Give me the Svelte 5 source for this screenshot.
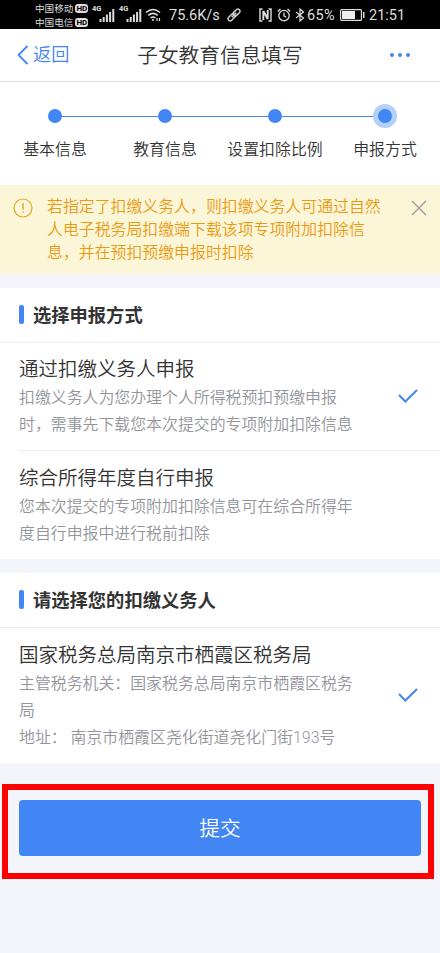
<script>
  let steps = ['基本信息', '教育信息', '设置扣除比例', '申报方式'];
  let current = 3;
  let showNotice = true;
  let selected = 0;

  let notice = '若指定了扣缴义务人，则扣缴义务人可通过自然\n人电子税务局扣缴端下载该项专项附加扣除信\n息，并在预扣预缴申报时扣除';

  let methods = [
    {
      title: '通过扣缴义务人申报',
      desc: '扣缴义务人为您办理个人所得税预扣预缴申报\n时，需事先下载您本次提交的专项附加扣除信息'
    },
    {
      title: '综合所得年度自行申报',
      desc: '您本次提交的专项附加扣除信息可在综合所得年\n度自行申报中进行税前扣除'
    }
  ];

  let agent = {
    title: '国家税务总局南京市栖霞区税务局',
    desc: '主管税务机关：国家税务总局南京市栖霞区税务\n局\n地址： 南京市栖霞区尧化街道尧化门街193号'
  };
</script>

<div class="page">
  <div class="status">
    <div class="carriers">
      <div>中国移动<b>HD</b></div>
      <div>中国电信<b>HD</b></div>
    </div>
    {#each [0, 1] as sim}
      <div class="signal">
        <span>4G</span>
        <svg width="16" height="14" viewBox="0 0 16 14">
          <path d="M1.5 14v-3M4.7 14v-5M7.9 14V6.500M11.100 14V4M14.300 14V1" stroke="#ddd" stroke-width="2" />
        </svg>
      </div>
    {/each}
    <svg class="wifi" width="17" height="14" viewBox="0 0 17 14" fill="none" stroke="#ddd" stroke-width="1.6">
      <path d="M1 4.500Q8 -1.500 15 4.500M3.300 7.300Q8 3.300 12.700 7.300M5.600 10Q8 8 10.400 10" />
      <circle cx="8" cy="12" r="1" fill="#ddd" stroke="none" />
      <path d="M12 10v3M14.500 10v3" stroke-width="1.200" />
    </svg>
    <span class="speed">75.6K/s</span>
    <svg class="link" width="14" height="14" viewBox="0 0 14 14" fill="none" stroke="#ccc" stroke-width="1.5">
      <rect x="-0.500" y="4.900" width="8" height="4.200" rx="2.100" transform="rotate(-45 7 7)" />
      <rect x="6.500" y="4.900" width="8" height="4.200" rx="2.100" transform="rotate(-45 7 7)" />
      <path d="M4.800 9.200l4.400-4.400" />
    </svg>
    <svg class="nfc" width="13" height="14" viewBox="0 0 13 14" fill="none" stroke="#ddd">
      <path d="M3.500 1H1v12h2.500M9.500 1H12v12H9.500" stroke-width="1.400" />
      <path d="M4.300 12V3l4.400 8V2" stroke-width="1.900" />
    </svg>
    <svg class="alarm" width="14" height="14" viewBox="0 0 14 14" fill="none" stroke="#ddd" stroke-width="1.300">
      <circle cx="7" cy="7.600" r="5.200" />
      <path d="M7 4.500v3.300l2.200 1.500M.8 3.500L3.500 1M13.200 3.500L10.500 1" />
    </svg>
    <svg class="bt" width="10" height="14" viewBox="0 0 10 14" fill="none" stroke="#ddd" stroke-width="1.200">
      <path d="M1 4l7.500 6L5 13V1l3.500 3L1 10" />
    </svg>
    <span class="percent">65%</span>
    <svg class="battery" width="25" height="12" viewBox="0 0 25 12">
      <rect x=".6" y=".6" width="20.800" height="10.800" rx="1" fill="none" stroke="#ddd" stroke-width="1.200" />
      <rect x="2" y="2" width="13" height="8" fill="#eee" />
      <rect x="23" y="3" width="1.500" height="6" fill="#ddd" />
    </svg>
    <span class="time">21:51</span>
  </div>

  <div class="nav">
    <div class="back">
      <svg width="12" height="20" viewBox="0 0 12 20" fill="none" stroke="#4285f4" stroke-width="1.800">
        <path d="M10.500 1L1.500 10l9 9" />
      </svg>
      <span>返回</span>
    </div>
    <div class="title">子女教育信息填写</div>
    <div class="more"><i></i><i></i><i></i></div>
  </div>

  <div class="steps">
    {#each steps as step, i}
      <div class="step" class:current={i === current}>
        <div class="track"><i></i></div>
        <span>{step}</span>
      </div>
    {/each}
  </div>

  {#if showNotice}
    <div class="notice">
      <svg class="warn" width="20" height="20" viewBox="0 0 20 20" fill="none" stroke="#eda31e" stroke-width="1.200">
        <circle cx="10" cy="10" r="9" />
        <path d="M10 5v6.800M10 13.300v1.500" stroke-width="1.400" />
      </svg>
      <p>{notice}</p>
      <button class="close" aria-label="关闭" on:click={() => (showNotice = false)}>
        <svg width="16" height="16" viewBox="0 0 16 16" stroke="#999" stroke-width="1.300">
          <path d="M1 1l14 14M15 1L1 15" />
        </svg>
      </button>
    </div>
  {/if}

  <div class="card">
    <h2>选择申报方式</h2>
    {#each methods as method, i}
      <button class="item" on:click={() => (selected = i)}>
        <strong>{method.title}</strong>
        <p>{method.desc}</p>
        {#if selected === i}
          <svg class="check" width="20" height="14" viewBox="0 0 20 14" fill="none" stroke="#4285f4" stroke-width="2">
            <path d="M1 6l6.300 6.500L19 1" />
          </svg>
        {/if}
      </button>
    {/each}
  </div>

  <div class="card">
    <h2>请选择您的扣缴义务人</h2>
    <button class="item agent">
      <strong>{agent.title}</strong>
      <p>{agent.desc}</p>
      <svg class="check" width="20" height="14" viewBox="0 0 20 14" fill="none" stroke="#4285f4" stroke-width="2">
        <path d="M1 6l6.300 6.500L19 1" />
      </svg>
    </button>
  </div>

  <div class="highlight">
    <button class="submit">提交</button>
  </div>
</div>

<style>
  :global(body) {
    margin: 0;
    background: #f4f5fa;
  }
  .page {
    width: 440px;
    height: 953px;
    overflow: hidden;
    background: #f4f5fa;
    color: #333;
    font-family: Roboto, "Noto Sans CJK SC", sans-serif;
    font-weight: 350;
  }
  button {
    border: none;
    padding: 0;
    background: none;
    font-family: inherit;
    font-weight: inherit;
    color: inherit;
    text-align: left;
    cursor: pointer;
  }
  p {
    margin: 0;
    white-space: pre;
  }
  svg {
    display: block;
    flex: none;
  }

  .status {
    display: flex;
    align-items: center;
    box-sizing: border-box;
    height: 29px;
    padding: 1px 0 0 35px;
    background: #000;
    color: #ddd;
    font-size: 14.5px;
    font-weight: 400;
    white-space: nowrap;
  }
  .carriers {
    width: 57px;
    padding-top: 1px;
    font-size: 9.6px;
    line-height: 14px;
  }
  .carriers div {
    display: flex;
    align-items: center;
  }
  .carriers b {
    margin-left: 2px;
    padding: 0 1px;
    border-radius: 3px;
    background: #ddd;
    color: #000;
    font-size: 8px;
    line-height: 9px;
  }
  .signal {
    position: relative;
    display: flex;
    justify-content: flex-end;
    width: 23px;
    margin-right: 4px;
  }
  .signal span {
    position: absolute;
    left: 0;
    top: -4px;
    font-size: 7.5px;
    font-weight: bold;
    line-height: 9px;
  }
  .wifi {
    margin-left: -1px;
  }
  .speed {
    width: 50px;
    margin-left: 7px;
  }
  .link {
    margin-left: 8px;
  }
  .nfc {
    margin-left: 18px;
  }
  .alarm {
    margin-left: 5px;
  }
  .bt {
    margin-left: 4px;
  }
  .percent {
    width: 31px;
    margin-left: 2px;
    letter-spacing: 0.4px;
  }
  .battery {
    margin-left: 2px;
  }
  .time {
    margin-left: 4px;
  }

  .nav {
    display: grid;
    grid-template-columns: 100px 1fr 100px;
    align-items: center;
    box-sizing: border-box;
    height: 53px;
    padding-bottom: 1px;
    border-bottom: 1px solid #dedede;
    background: #fff;
  }
  .back {
    display: flex;
    align-items: center;
    gap: 4px;
    padding-left: 17px;
    color: #4285f4;
    font-size: 18.2px;
    line-height: 26px;
  }
  .title {
    padding-bottom: 2px;
    font-size: 20.7px;
    text-align: center;
    white-space: nowrap;
  }
  .more {
    display: flex;
    gap: 4px;
    padding-left: 50px;
  }
  .more i {
    width: 4px;
    height: 4px;
    border-radius: 50%;
    background: #4285f4;
  }

  .steps {
    display: flex;
    box-sizing: border-box;
    height: 103px;
    padding-top: 22px;
    background: #fff;
  }
  .step {
    width: 110px;
    text-align: center;
    font-size: 15.9px;
    line-height: 24px;
  }
  .track {
    display: flex;
    align-items: center;
    height: 24px;
    margin-bottom: 10px;
  }
  .track::before,
  .track::after {
    content: '';
    flex: 1;
    height: 1px;
    background: #4285f4;
  }
  .step:first-child .track::before,
  .step:last-child .track::after {
    background: transparent;
  }
  .track i {
    width: 14px;
    height: 14px;
    border-radius: 50%;
    background: #4285f4;
  }
  .current .track i {
    border: 5px solid #b3d0fa;
  }

  .notice {
    display: flex;
    box-sizing: border-box;
    height: 89px;
    margin-bottom: 14px;
    padding: 10px 0 0 13px;
    background: #fcf6d9;
    color: #ea9a10;
    font-size: 15.9px;
    line-height: 23px;
  }
  .warn {
    margin: 3px 14px 0 0;
  }
  .notice p {
    width: 364px;
  }
  .close {
    align-self: flex-start;
    margin-top: 5px;
  }

  .card {
    margin-bottom: 14px;
    background: #fff;
  }
  h2 {
    display: flex;
    align-items: center;
    box-sizing: border-box;
    height: 55px;
    margin: 0;
    padding: 0 19px 2px;
    border-bottom: 1px solid #ececee;
    font-size: 18.3px;
    font-weight: bold;
  }
  h2::before {
    content: '';
    width: 5px;
    height: 19px;
    margin-right: 9px;
    border-radius: 2px;
    background: #4285f4;
  }
  .item {
    position: relative;
    display: block;
    width: 421px;
    margin-left: 19px;
    padding: 12px 0;
  }
  .item + .item {
    padding-top: 13px;
    border-top: 1px solid #ececee;
  }
  .item.agent {
    padding: 13px 0 12px;
  }
  .item strong {
    display: block;
    font-size: 19.5px;
    font-weight: inherit;
    line-height: 29px;
  }
  .item p {
    color: #93959c;
    font-size: 15.9px;
    line-height: 27px;
  }
  .check {
    position: absolute;
    right: 22px;
    top: 50%;
    margin-top: -8px;
  }

  .highlight {
    box-sizing: border-box;
    width: 432px;
    height: 95px;
    margin: 21px 0 0 2px;
    padding: 10px 7px 0 11px;
    border: 6px solid #f00;
  }
  .submit {
    width: 402px;
    height: 56px;
    padding-bottom: 3px;
    border-radius: 4px;
    background: #4285f4;
    color: #fff;
    font-size: 20.7px;
    text-align: center;
  }
</style>
